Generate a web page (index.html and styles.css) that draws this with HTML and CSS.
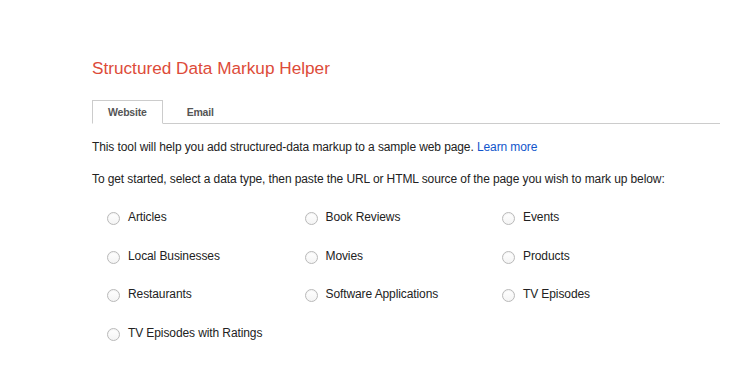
FILE: index.html
```html
<!DOCTYPE html>
<html>
  <head>
    <meta charset="utf-8">
    <title>Structured Data Markup Helper</title>
    <link rel="stylesheet" href="styles.css">
  </head>
  <body>
    <div class="page">
      <h1 class="title">Structured Data Markup Helper</h1>

      <div class="tabs">
        <div class="tab active">Website</div>
        <div class="tab">Email</div>
      </div>

      <p class="intro">This tool will help you add structured-data markup to a sample web page. <a href="#">Learn more</a></p>
      <p class="intro">To get started, select a data type, then paste the URL or HTML source of the page you wish to mark up below:</p>

      <div class="types">
        <label class="type"><input type="radio" name="type"><span>Articles</span></label>
        <label class="type"><input type="radio" name="type"><span>Book Reviews</span></label>
        <label class="type"><input type="radio" name="type"><span>Events</span></label>
        <label class="type"><input type="radio" name="type"><span>Local Businesses</span></label>
        <label class="type"><input type="radio" name="type"><span>Movies</span></label>
        <label class="type"><input type="radio" name="type"><span>Products</span></label>
        <label class="type"><input type="radio" name="type"><span>Restaurants</span></label>
        <label class="type"><input type="radio" name="type"><span>Software Applications</span></label>
        <label class="type"><input type="radio" name="type"><span>TV Episodes</span></label>
        <label class="type"><input type="radio" name="type"><span>TV Episodes with Ratings</span></label>
      </div>
    </div>
  </body>
</html>
```

FILE: styles.css
```css
:root {
  --title: #dd4b39;
  --text: #222222;
  --tab-text: #555555;
  --link: #1155cc;
  --border: #cccccc;
  --radio-border: #b9b9b9;
}

body {
  margin: 0;
  background: #ffffff;
  color: var(--text);
  font-family: "Liberation Sans", Arial, sans-serif;
}

.page {
  padding: 57px 16px 0 92px;
}

.title {
  margin: 0 0 21px;
  font-size: 17.2px;
  font-weight: normal;
  line-height: 22px;
  color: var(--title);
}

.tabs {
  display: flex;
  border-bottom: 1px solid var(--border);
}

.tab {
  margin-bottom: -1px;
  padding: 0 15px;
  border: 1px solid transparent;
  font-size: 10.5px;
  font-weight: bold;
  letter-spacing: -0.2px;
  line-height: 22px;
  color: var(--tab-text);
}

.tab.active {
  border-color: var(--border) var(--border) #ffffff;
  background: #ffffff;
  margin-right: 8px;
}

.intro {
  margin: 15px 0 0;
  font-size: 12px;
  letter-spacing: -0.1px;
  line-height: 16px;
}

.intro + .intro {
  margin-top: 16px;
}

.intro a {
  color: var(--link);
  text-decoration: none;
}

.types {
  display: grid;
  grid-template-columns: repeat(3, 197.5px);
  row-gap: 22.5px;
  margin-top: 22px;
  padding-left: 15px;
}

.type {
  display: flex;
  align-items: flex-start;
  gap: 8px;
  font-size: 12px;
  letter-spacing: -0.1px;
  line-height: 16px;
}

.type input {
  appearance: none;
  flex-shrink: 0;
  width: 13px;
  height: 13px;
  margin: 3px 0 0;
  border: 1px solid var(--radio-border);
  border-radius: 50%;
  background: linear-gradient(#ffffff, #f4f4f4);
  box-shadow: inset 0 1px 1px rgba(0, 0, 0, 0.05);
}
```
